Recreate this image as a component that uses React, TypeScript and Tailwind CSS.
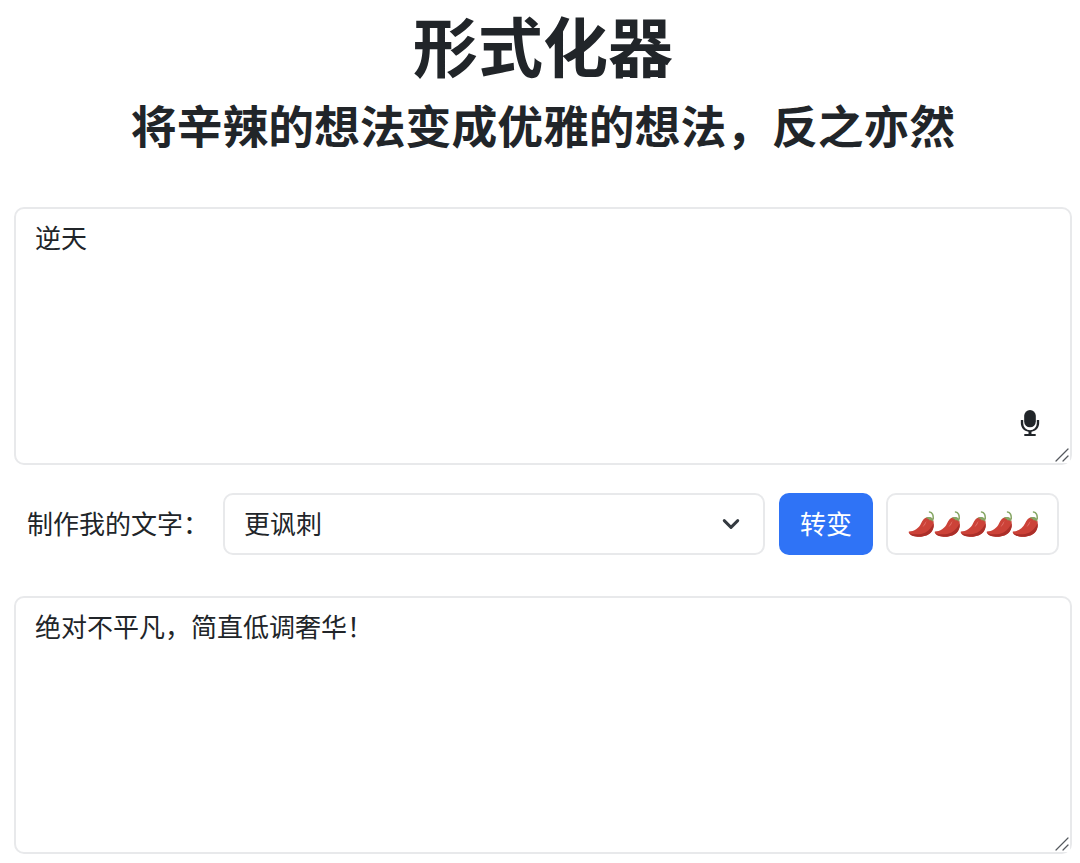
const font = "font-['Inter','Liberation_Sans','Noto_Sans_CJK_SC',sans-serif]";

function Chili() {
  return (
    <svg width="26" height="26" viewBox="0 0 26 26" className="block shrink-0">
      <path d="M21.500 1C24.300 1.200 25.500 4 25.200 8" fill="none" stroke="#86a765" strokeWidth="1.500" strokeLinecap="round" />
      <path d="M1 20.500C6 20.500 11 17 13 12.500C14.500 9.500 16 7 18.500 6.500C21 6 24 6.500 25 8.500C26 11 26 15 25 18C23.500 22.500 19 25 13 25.700C8 26 3 25 1.200 22.500C.6 21.500 .6 20.500 1 20.500z" fill="#cc4238" />
      <path d="M1.200 22.200C6 24 13 23.700 17.500 21.500C21 19.500 24 16 25.500 12.500C26 15 25.800 16 25 18C23.500 22.500 19 25 13 25.700C8 26 3 25 1.200 22.200z" fill="#ab2f29" />
      <path d="M14.500 16C16 13.500 17 11.500 18.500 10C17.800 13 16.500 15 14.500 16z" fill="#e0706a" />
      <path d="M17.500 7C19.500 5.600 23.500 5.700 25 8C25.300 9 25 10 24.700 10.800C24 9.500 23 9 21.800 9.500C21 8 19 7.300 17.500 7z" fill="#86a765" />
    </svg>
  );
}

function Mic() {
  return (
    <svg width="20" height="26" viewBox="0 0 16 21" className="block" fill="#212529">
      <rect x="3.300" y="0" width="9.400" height="14" rx="4.700" />
      <path d="M.6 8h1.900v2.800a5.500 5.500 0 0 0 11 0V8h1.900v2.800c0 3.500-2.600 6.400-6.200 6.800v1.700h3.400V21H3.400v-1.700h3.400v-1.700c-3.600-.4-6.200-3.300-6.200-6.800z" />
    </svg>
  );
}

function Handle() {
  return (
    <svg width="16" height="16" viewBox="0 0 16 16" className="block bg-white" fill="none" stroke="#55595e" strokeWidth="1.200" strokeLinecap="round">
      <path d="M2 14L14 2" />
      <path d="M9 14L14 9" />
    </svg>
  );
}

function Area({ value, height }: { value: string; height: string }) {
  return (
    <textarea
      readOnly
      value={value}
      className={`block w-full ${height} border-2 border-[#e8e9eb] rounded-[10px] px-[19px] py-[10px] text-[26px] leading-[39px] outline-none resize-none`}
    />
  );
}

export default function App() {
  return (
    <div className={`${font} w-[1080px] h-[863px] bg-white text-[#212529] overflow-hidden pl-[14px] pr-[8px] pt-[10px]`}>
      <h1 className="text-[65px] leading-[78px] font-semibold text-center">形式化器</h1>
      <h2 className="text-[45.800px] leading-[55px] font-semibold text-center mt-[12px]">将辛辣的想法变成优雅的想法，反之亦然</h2>

      <div className="relative mt-[52px]">
        <Area value="逆天" height="h-[258px]" />
        <div className="absolute right-[32px] bottom-[29px]">
          <Mic />
        </div>
        <div className="absolute right-[2px] bottom-[2px]">
          <Handle />
        </div>
      </div>

      <div className="flex items-center mt-[28px] px-[13px] h-[62px]">
        <span className="text-[26px] w-[196px] shrink-0">制作我的文字：</span>
        <div className="flex-1 h-full border-2 border-[#e8e9eb] rounded-[10px] flex items-center justify-between pl-[19px] pr-[23px] text-[26px]">
          <span>更讽刺</span>
          <svg width="18" height="18" viewBox="0 0 16 16" fill="none" stroke="#343a40" strokeWidth="2.600" strokeLinecap="round" strokeLinejoin="round">
            <path d="M2 5l6 6 6-6" />
          </svg>
        </div>
        <button className="ml-[14px] w-[94px] h-full rounded-[10px] bg-[#2f73f6] text-white text-[26px] shrink-0">转变</button>
        <div className="ml-[13px] w-[173px] h-full border-2 border-[#e8e9eb] rounded-[10px] flex items-center justify-center shrink-0">
          <Chili />
          <Chili />
          <Chili />
          <Chili />
          <Chili />
        </div>
      </div>

      <div className="relative mt-[41px]">
        <Area value="绝对不平凡，简直低调奢华！" height="h-[258px]" />
        <div className="absolute right-[2px] bottom-[2px]">
          <Handle />
        </div>
      </div>
    </div>
  );
}
